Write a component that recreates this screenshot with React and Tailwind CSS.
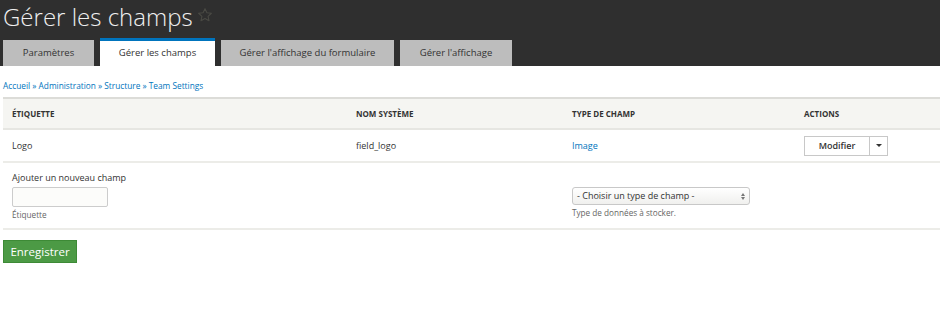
import React from "react";

function Star() {
  return (
    <svg width="16" height="16" viewBox="0 0 24 24" className="ml-1 mt-[6px]">
      <path d="M12 2.5l2.9 6.2 6.7.7-5 4.6 1.4 6.6L12 17.3l-6 3.3 1.4-6.6-5-4.6 6.7-.7z" fill="none" stroke="#4a4a44" strokeWidth="1.6" strokeLinejoin="round" />
    </svg>
  );
}

export default function App() {
  const font = { fontFamily: '"Open Sans", "Noto Sans", sans-serif' };
  return (
    <div className="w-[940px] h-[314px] bg-white" style={font}>
      <div className="bg-[#2f2f2f] h-[66px] flex flex-col">
        <div className="flex items-start pl-[3px] pt-[1px] h-[38px]">
          <h1 className="text-[24px] font-light text-[#f0f0f0] leading-[32px]">Gérer les champs</h1>
          <Star />
        </div>
        <div className="flex gap-[6px] pl-[3px] mt-auto">
          <div className="w-[91px] h-[26px] bg-[#bdbdbd] flex items-center justify-center text-[9.5px] text-[#333]">Paramètres</div>
          <div className="w-[115px] h-[28px] bg-white border-t-[3px] border-[#0074bd] flex items-center justify-center text-[9.5px] text-[#333] -mt-[2px]">Gérer les champs</div>
          <div className="w-[173px] h-[26px] bg-[#bdbdbd] flex items-center justify-center text-[9.5px] text-[#333]">Gérer l'affichage du formulaire</div>
          <div className="w-[112px] h-[26px] bg-[#bdbdbd] flex items-center justify-center text-[9.5px] text-[#333]">Gérer l'affichage</div>
        </div>
      </div>
      <div className="pl-[3px] pt-[14px] text-[8.3px] text-[#0074bd] leading-[12px]">
        Accueil » Administration » Structure » Team Settings
      </div>
      <div className="ml-[3px] mt-[5px] border-t-2 border-[#dcdcd8]">
        <div className="grid grid-cols-[353px_216px_232px_1fr] h-[31px] items-center bg-[#f5f5f2] border-b-2 border-[#e6e6e2] text-[8px] font-bold text-[#333] uppercase">
          <div className="pl-[9px]">Étiquette</div>
          <div>Nom système</div>
          <div>Type de champ</div>
          <div>Actions</div>
        </div>
        <div className="grid grid-cols-[353px_216px_232px_1fr] h-[33px] items-center border-b-2 border-[#ecece8] text-[9px] text-[#333]">
          <div className="pl-[9px]">Logo</div>
          <div>field_logo</div>
          <div className="text-[#0074bd]">Image</div>
          <div className="flex">
            <div className="flex h-[20px] border border-[#c8c8c8] bg-white">
              <div className="w-[64px] flex items-center justify-center text-[9px] font-semibold text-[#333]">Modifier</div>
              <div className="w-[18px] border-l border-[#c8c8c8] flex items-center justify-center">
                <div className="w-0 h-0 border-l-[3px] border-r-[3px] border-t-[3px] border-l-transparent border-r-transparent border-t-[#333]" />
              </div>
            </div>
          </div>
        </div>
        <div className="grid grid-cols-[569px_1fr] h-[67px] border-b-2 border-[#ecece8] text-[#333]">
          <div className="pl-[9px] pt-[9px]">
            <div className="text-[9px] leading-[12px]">Ajouter un nouveau champ</div>
            <div className="mt-[3px] w-[96px] h-[20px] border border-[#cccccc] bg-[#fcfcfa] rounded-[2px]" />
            <div className="mt-[3px] text-[8.2px] text-[#666] leading-[10px]">Étiquette</div>
          </div>
          <div className="pt-[24px]">
            <div className="w-[178px] h-[18px] border border-[#c8c8c8] rounded-[3px] bg-gradient-to-b from-white to-[#f0f0ee] flex items-center justify-between px-[4px]">
              <span className="text-[9px] text-[#333]">- Choisir un type de champ -</span>
              <span className="flex flex-col items-center gap-[1px]">
                <span className="w-0 h-0 border-l-[2px] border-r-[2px] border-b-[3px] border-l-transparent border-r-transparent border-b-[#777]" />
                <span className="w-0 h-0 border-l-[2px] border-r-[2px] border-t-[3px] border-l-transparent border-r-transparent border-t-[#777]" />
              </span>
            </div>
            <div className="mt-[3px] text-[8.2px] text-[#666] leading-[10px]">Type de données à stocker.</div>
          </div>
        </div>
      </div>
      <div className="flex pl-[3px] pt-[10px]">
        <button className="w-[74px] h-[23px] bg-[#4c9a45] text-white text-[11.5px] border border-[#3d8a36]">Enregistrer</button>
      </div>
    </div>
  );
}
